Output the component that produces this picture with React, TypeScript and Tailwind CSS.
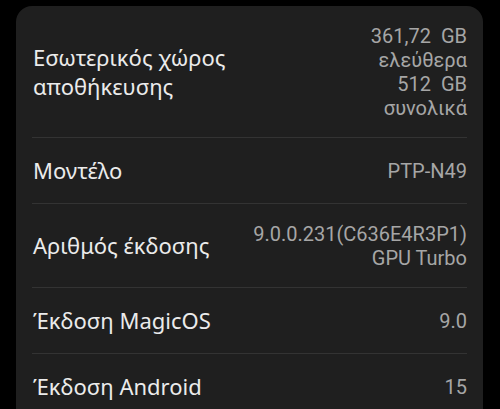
export default function App() {
  const rows = [
    { label: ["Εσωτερικός χώρος", "αποθήκευσης"], value: ["361,72\u00a0\u00a0GB", "ελεύθερα", "512\u00a0\u00a0GB", "συνολικά"] },
    { label: ["Μοντέλο"], value: ["PTP-N49"] },
    { label: ["Αριθμός έκδοσης"], value: ["9.0.0.231(C636E4R3P1)", "GPU Turbo"] },
    { label: ["Έκδοση MagicOS"], value: ["9.0"] },
    { label: ["Έκδοση Android"], value: ["15"] },
  ];

  return (
    <div className="h-screen bg-black pt-[6px] pl-4 pr-[17px] overflow-hidden">
      <div className="bg-[#1f1f1f] rounded-t-[16px] px-4">
        {rows.map((row, i) => (
          <div
            key={i}
            className={`flex items-center justify-between min-h-[66px] py-[17.5px] ${i === 0 ? "" : "border-t border-[#333333]"}`}
          >
            <div className="text-[22px] leading-[29px] text-[#ebebeb] pl-px" style={{ fontFamily: '"Noto Sans", sans-serif' }}>
              {row.label.map((l) => (
                <div key={l}>{l}</div>
              ))}
            </div>
            <div className="text-right text-[20px] leading-[24px] text-[#a6a6a6]" style={{ fontFamily: 'Roboto, sans-serif' }}>
              {row.value.map((v) => (
                <div key={v}>{v}</div>
              ))}
            </div>
          </div>
        ))}
      </div>
    </div>
  );
}
